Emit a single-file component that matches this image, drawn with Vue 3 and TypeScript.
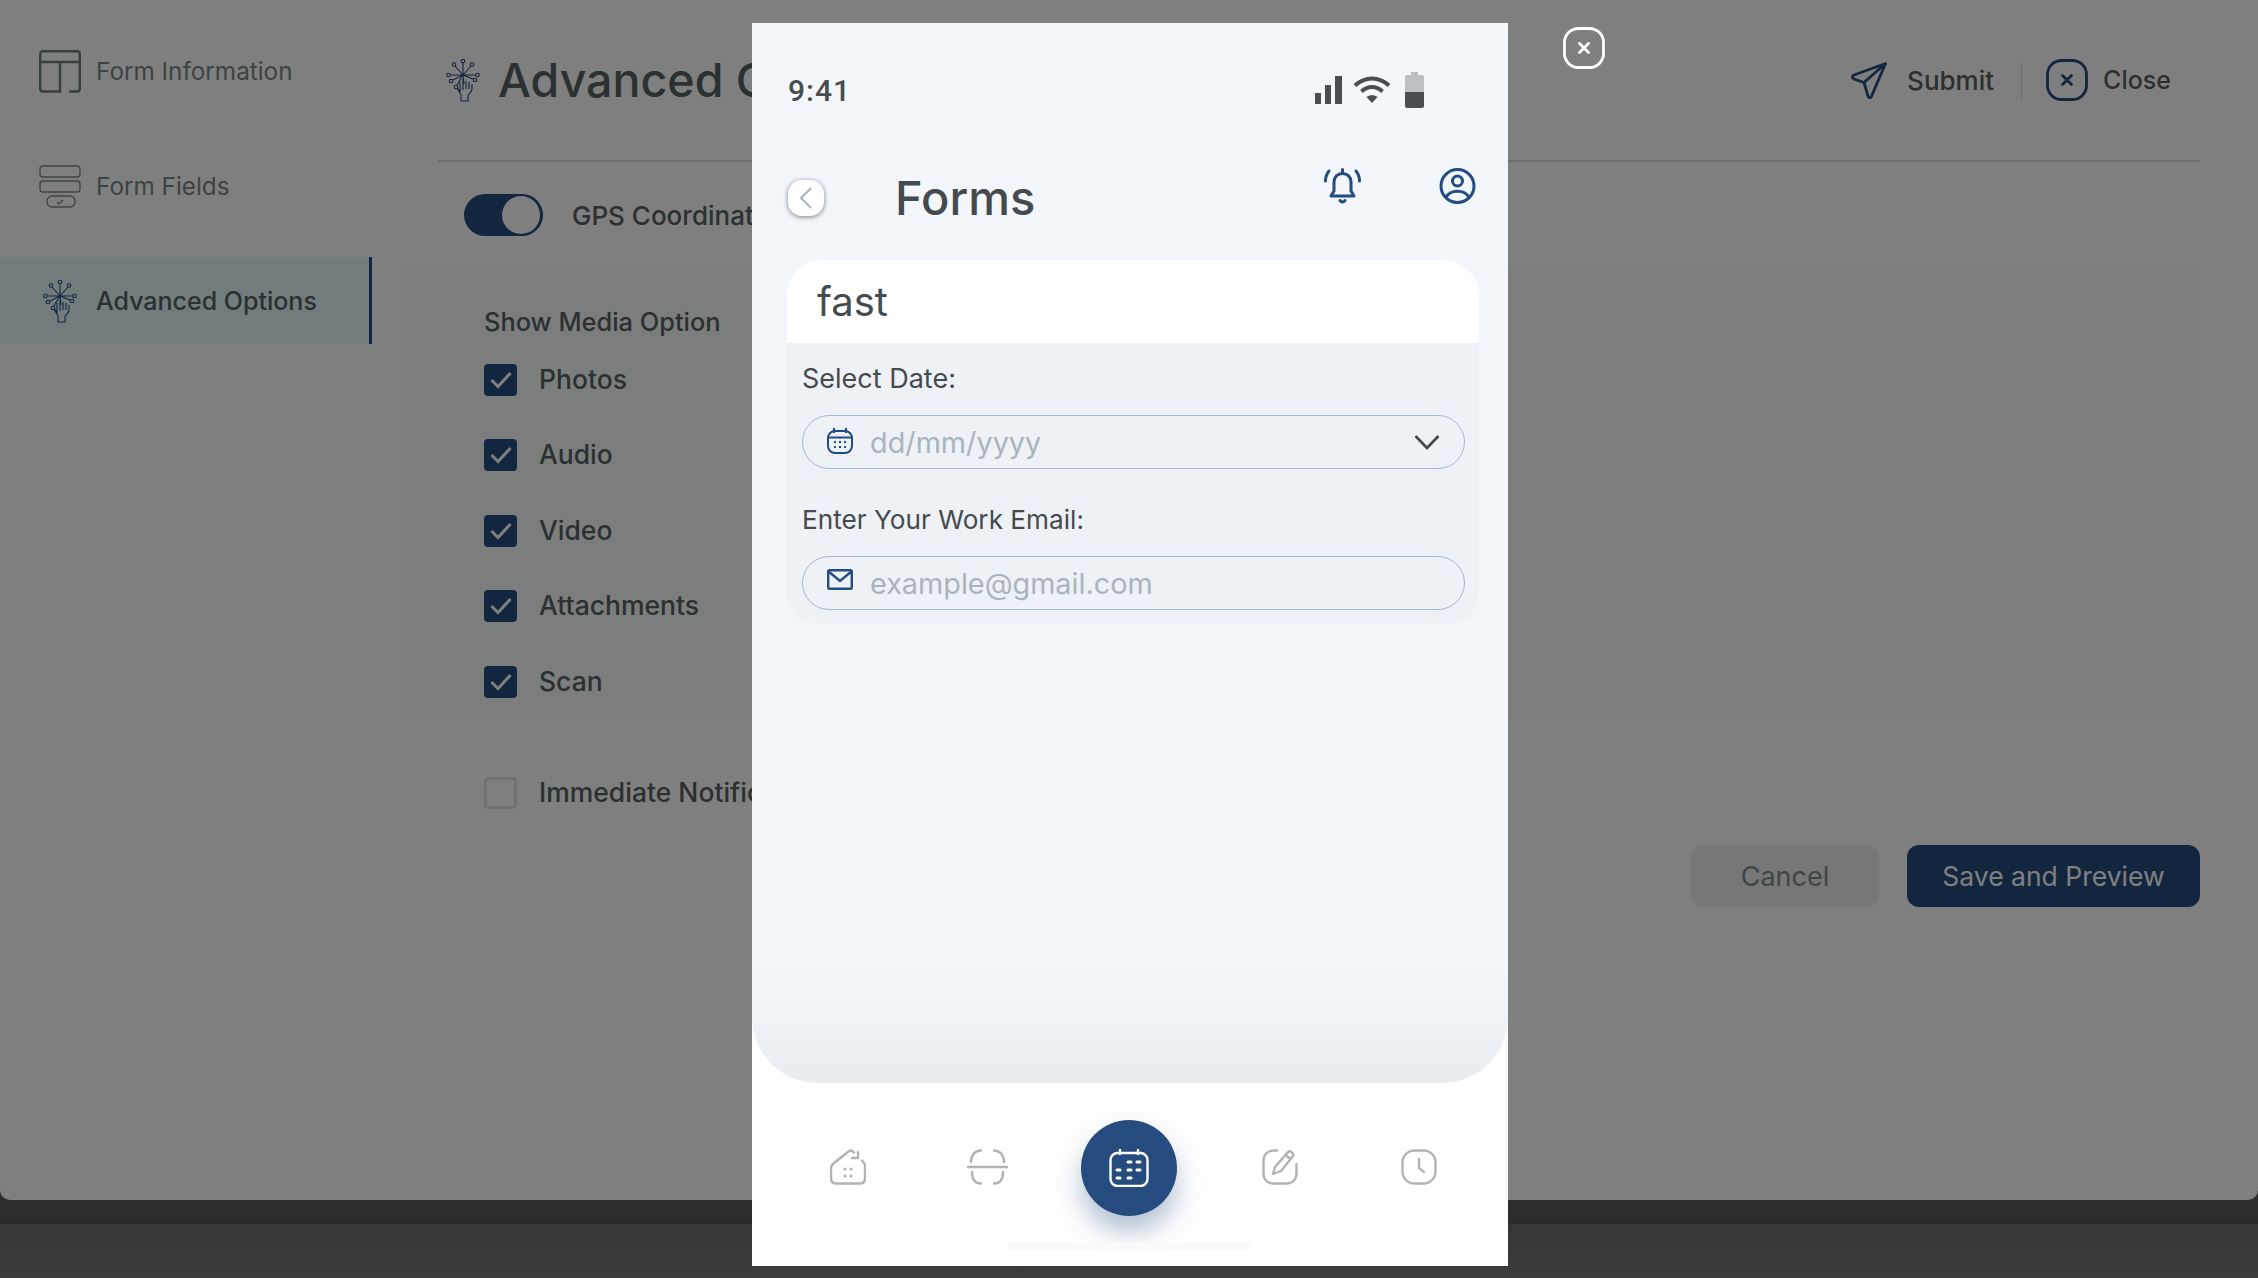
<template>
  <div class="page">
    <svg class="defs" width="0" height="0">
      <symbol id="burst" viewBox="0 0 34 44">
        <g fill="none" stroke="currentColor" stroke-width="1.1">
          <path d="M17 17V5M17 17l-8-9M17 17l8-9M17 17H4M17 17h13M17 17l-10 5M17 17l10 4M17 17l-6 10M17 17l1 9" />
          <circle cx="17" cy="3" r="1.8" />
          <circle cx="8" cy="6.5" r="1.8" />
          <circle cx="26" cy="6.5" r="1.8" />
          <circle cx="2.5" cy="17" r="1.8" />
          <circle cx="31.5" cy="17" r="1.8" />
          <circle cx="5" cy="23" r="1.8" />
          <circle cx="29" cy="22" r="1.8" />
          <circle cx="10" cy="29" r="1.8" />
          <path d="M17 21v11M20 23v8M23 24v7M26 26v5M14 24v9l-3-3M26 31c0 3-3 5-4 6v6H15v-6l-4-7" />
        </g>
      </symbol>
    </svg>

    <div class="shell">
      <aside class="sidebar">
        <div v-for="item in menu" :key="item.label" class="side-item" :class="{ active: item.active }">
          <span class="side-icon">
            <svg v-if="item.icon === 'layout'" width="42" height="43" viewBox="0 0 42 43" fill="none" stroke="#6d7f81" stroke-width="2.4">
              <path d="M30 41.5h8a2.8 2.8 0 0 0 2.8-2.8V4A2.8 2.8 0 0 0 38 1.2H4A2.8 2.8 0 0 0 1.2 4v34.7A2.8 2.8 0 0 0 4 41.5h17V12M1.2 12h39.6" />
            </svg>
            <svg v-else-if="item.icon === 'fields'" width="42" height="43" viewBox="0 0 42 43" fill="none" stroke="#7e8d8f" stroke-width="1.4">
              <rect x="1" y="1" width="40" height="11" rx="3" />
              <rect x="1" y="16" width="40" height="11" rx="3" />
              <rect x="8" y="31" width="28" height="11" rx="5" />
              <path d="M18 37l2 2 4-4" />
            </svg>
            <svg v-else width="34" height="44" class="burst"><use href="#burst" /></svg>
          </span>
          <span>{{ item.label }}</span>
        </div>
      </aside>

      <main class="main">
        <header class="main-head">
          <svg width="34" height="44" class="burst head-burst"><use href="#burst" /></svg>
          <h1 class="main-title">Advanced Options</h1>
          <div class="actions">
            <button class="action">
              <svg width="36" height="37" viewBox="0 0 36 37" fill="none" stroke="#244c7e" stroke-width="2.8" stroke-linejoin="round">
                <path d="M34.5 1.5 3 13c-2.200 1-2 3.200 0 4l10 3.500 4 13.500c.7 2.200 3 2 3.600 0L34.500 1.500ZM13 20.500 34.500 1.500" />
              </svg>
              Submit
            </button>
            <span class="action-sep"></span>
            <button class="action close-action">
              <svg width="42" height="42" viewBox="0 0 42 42" fill="none" stroke="#244c7e" stroke-width="2.800" stroke-linecap="round">
                <rect x="1.500" y="1.500" width="39" height="39" rx="14" />
                <path d="M16.500 16.500l9 9M25.500 16.500l-9 9" />
              </svg>
              Close
            </button>
          </div>
        </header>

        <div class="gps-row">
          <span class="toggle"><span class="toggle-knob"></span></span>
          <span class="gps-label">GPS Coordinates</span>
        </div>

        <section class="media-panel">
          <div class="media-title">Show Media Option</div>
          <div class="media-list">
            <label v-for="opt in mediaOptions" :key="opt" class="check-row">
              <span class="check on">
                <svg width="24" height="20" viewBox="0 0 24 20" fill="none" stroke="#fff" stroke-width="3">
                  <path d="M2.500 10l6.500 6.500L21.500 3" />
                </svg>
              </span>
              <span class="check-text">{{ opt }}</span>
            </label>
          </div>
        </section>

        <label class="check-row notify-row">
          <span class="check"></span>
          <span class="check-text">Immediate Notification</span>
        </label>

        <div class="form-buttons">
          <button class="btn-cancel">Cancel</button>
          <button class="btn-save">Save and Preview</button>
        </div>
      </main>
    </div>

    <div class="base-footer"></div>
    <div class="base-bottom"></div>

    <!-- preview overlay -->
    <div class="backdrop"></div>

    <div class="phone">
      <div class="phone-screen">
        <div class="status-bar">
          <span class="time">9:41</span>
          <span class="status-icons">
            <svg width="28" height="28" viewBox="0 0 28 28" fill="#4a4e52">
              <rect x="0" y="17" width="6" height="11" />
              <rect x="10" y="9" width="6" height="19" />
              <rect x="20" y="0" width="7" height="28" />
            </svg>
            <svg width="38" height="28" viewBox="0 0 38 28" fill="none" stroke="#4a4e52" stroke-width="4">
              <path d="M2 9.500c10-9.500 24-9.500 34 0M8.500 15.500c6.500-6 14.500-6 21 0" />
              <path d="M19 27l-5.500-6c3-2.500 8-2.500 11 0L19 27Z" fill="#4a4e52" stroke="none" />
            </svg>
            <svg class="battery" width="19" height="36" viewBox="0 0 19 36">
              <path d="M6 0h7v3h4a2 2 0 0 1 2 2v15H0V5a2 2 0 0 1 2-2h4Z" fill="#bcc0c4" />
              <path d="M0 20h19v14a2 2 0 0 1-2 2H2a2 2 0 0 1-2-2Z" fill="#4a4e52" />
            </svg>
          </span>
        </div>

        <div class="phone-head">
          <button class="back">
            <svg width="14" height="24" viewBox="0 0 14 24" fill="none" stroke="#a9b5be" stroke-width="2">
              <path d="M12 2 2 12l10 10" />
            </svg>
          </button>
          <h2 class="phone-title">Forms</h2>
          <svg class="bell" width="37" height="36" viewBox="0 0 37 36" fill="none" stroke="#234c80" stroke-width="3" stroke-linecap="round">
            <path d="M7 28h23l-3-5V14c0-5-3.500-8.500-8.500-8.500S10 9 10 14v9l-3 5Z" stroke-linejoin="round" />
            <path d="M18.500 1.500v3M16 32.500c1.500 2 3.500 2 5 0M5 3C2.500 6 1.500 9.500 1.500 13M32 3c2.500 3 3.500 6.500 3.500 10" />
          </svg>
          <svg width="37" height="36" viewBox="0 0 37 36" fill="none" stroke="#234c80" stroke-width="3">
            <circle cx="18.500" cy="18" r="16.500" />
            <circle cx="18.500" cy="13" r="5" />
            <path d="M7 30c3-9 20-9 23 0" />
          </svg>
        </div>

        <div class="form-card">
          <div class="form-name">fast</div>
          <div class="form-body">
            <div class="field-label">Select Date:</div>
            <div class="field">
              <svg class="field-icon" width="26" height="27" viewBox="0 0 26 27" fill="none" stroke="#234c80" stroke-width="2">
                <rect x="1" y="4" width="24" height="22" rx="7" />
                <path d="M7 1v5M19 1v5M1 10.500h24" />
                <path d="M7 15h2M12 15h2M17 15h2M7 20h2M12 20h2M17 20h2" stroke-width="1.800" />
              </svg>
              <span class="placeholder">dd/mm/yyyy</span>
              <svg class="chevron" width="26" height="16" viewBox="0 0 26 16" fill="none" stroke="#454a4f" stroke-width="2.600">
                <path d="M1.500 2 13 14 24.500 2" />
              </svg>
            </div>
            <div class="field-label second">Enter Your Work Email:</div>
            <div class="field">
              <svg class="field-icon mail" width="26" height="21" viewBox="0 0 26 21" fill="none" stroke="#234c80" stroke-width="2.400">
                <rect x="1.200" y="1.200" width="23.600" height="18.600" rx="1.500" />
                <path d="M1.500 2.500 13 12 24.500 2.500" />
              </svg>
              <span class="placeholder">example@gmail.com</span>
            </div>
          </div>
        </div>
      </div>

      <nav class="tabbar">
        <svg class="tab tab-home" width="36" height="36" viewBox="0 0 36 36" fill="none" stroke="#b3b3b3" stroke-width="2.400" stroke-linecap="round">
          <path d="M24 3.500c-2-2.500-4-2.500-6-.5L4 14c-2 1.500-3 3-3 5v10c0 3.500 2 5.500 5 5.500h24c3 0 5-2 5-5.500V17c0-2.500-1.500-4-3-5.500M28 3v6h-6" />
          <path d="M15 20h.1M21 20h.1M15 27h.1M21 27h.1" stroke-width="3" />
        </svg>
        <svg class="tab tab-scan" width="41" height="36" viewBox="0 0 41 36" fill="none" stroke="#b3b3b3" stroke-width="2.400" stroke-linecap="round">
          <path d="M1 18h39" />
          <path d="M4 13C4 6 8 1.500 14 1.500M37 13c0-7-4-11.500-10-11.500M5 23c0 7 3 11.500 9 11.500M36 23c0 7-3 11.500-9 11.500" />
        </svg>
        <button class="tab-main">
          <svg width="40" height="38" viewBox="0 0 40 38" fill="none" stroke="#fff" stroke-width="2.400" stroke-linecap="round">
            <rect x="1.500" y="4" width="37" height="33" rx="7" />
            <path d="M11 1v4M29 1v4" />
            <path d="M19 13h3M28 13h3M8 21h3M19 21h3M28 21h3M8 29h3M19 29h3" stroke-width="3" />
          </svg>
        </button>
        <svg class="tab tab-edit" width="36" height="36" viewBox="0 0 36 36" fill="none" stroke="#b3b3b3" stroke-width="2.400" stroke-linecap="round" stroke-linejoin="round">
          <path d="M15 1.500H12C5 1.500 1.500 6 1.500 12v12C1.500 31 6 34.500 12 34.500h12c7 0 10.500-4.500 10.500-10.500v-9" />
          <path d="M11 25l2-7L26 3c2-2 6 1 5 4L19 22l-8 3ZM23.500 6l5 4" />
        </svg>
        <svg class="tab tab-clock" width="36" height="36" viewBox="0 0 36 36" fill="none" stroke="#b3b3b3" stroke-width="2.400" stroke-linecap="round">
          <rect x="1.500" y="1.500" width="33" height="33" rx="12" />
          <path d="M18 10v9l5 4" />
        </svg>
        <span class="home-bar"></span>
      </nav>
    </div>

    <button class="preview-close">
      <svg width="42" height="42" viewBox="0 0 42 42" fill="none" stroke="#fff" stroke-width="2.800" stroke-linecap="round">
        <rect x="1.500" y="1.500" width="39" height="39" rx="14" />
        <path d="M16.500 16.500l9 9M25.500 16.500l-9 9" />
      </svg>
    </button>
  </div>
</template>

<script setup lang="ts">
interface MenuItem {
  label: string;
  icon: string;
  active?: boolean;
}

const menu: MenuItem[] = [
  { label: "Form Information", icon: "layout" },
  { label: "Form Fields", icon: "fields" },
  { label: "Advanced Options", icon: "burst", active: true },
];

const mediaOptions = ["Photos", "Audio", "Video", "Attachments", "Scan"];
</script>

<style>
html,
body {
  margin: 0;
  background: #6c6c6c;
}
</style>

<style scoped>
.page {
  position: relative;
  width: 2258px;
  height: 1278px;
  overflow: hidden;
  font-family: Inter, "Noto Sans", sans-serif;
  color: #566060;
  background: #5a5a5a;
}

.defs {
  position: absolute;
}

button {
  font-family: inherit;
  border: none;
  background: none;
  padding: 0;
}

.shell {
  display: flex;
  height: 1200px;
  background: #fff;
  border-radius: 0 0 10px 10px;
}

.sidebar {
  width: 372px;
  flex-shrink: 0;
  padding-top: 28px;
  display: flex;
  flex-direction: column;
  gap: 29px;
  box-sizing: border-box;
}

.side-item {
  height: 86px;
  display: flex;
  align-items: center;
  padding-left: 39px;
  gap: 15px;
  font-size: 24.3px;
  color: #7a8688;
}

.side-item.active {
  height: 87px;
  margin-top: -1px;
  background: #e4f8f8;
  border-right: 3px solid #244c7e;
  color: #566060;
  font-size: 25px;
  font-weight: 500;
}

.side-icon {
  width: 42px;
  display: flex;
  justify-content: center;
}

.burst {
  color: #244c7e;
}

.main {
  flex: 1;
  padding: 0 58px 0 66px;
  min-width: 0;
}

.main-head {
  height: 162px;
  display: flex;
  align-items: center;
  border-bottom: 2px solid #dadada;
  box-sizing: border-box;
}

.head-burst {
  margin: 0 18px 0 8px;
}

.main-title {
  margin: 0;
  font-size: 46.5px;
  font-weight: 500;
  color: #566060;
}

.actions {
  margin-left: auto;
  margin-right: 29px;
  display: flex;
  align-items: center;
}

.action {
  display: flex;
  align-items: center;
  gap: 20px;
  font-size: 26px;
  font-weight: 500;
  color: #5c5c5c;
}

.close-action {
  gap: 15px;
  font-size: 25px;
}

.action-sep {
  width: 1px;
  height: 39px;
  background: #dcdcdc;
  margin: 0 24px 0 27px;
}

.gps-row {
  display: flex;
  align-items: center;
  gap: 29px;
  margin: 32px 0 30px 26px;
  height: 42px;
  font-size: 26px;
  font-weight: 500;
}

.toggle {
  width: 79px;
  height: 42px;
  border-radius: 21px;
  background: #244c7e;
  display: flex;
  justify-content: flex-end;
  padding: 2px 3px;
  box-sizing: border-box;
}

.toggle-knob {
  width: 38px;
  height: 38px;
  border-radius: 50%;
  background: #fff;
}

.media-panel {
  margin-left: -33px;
  height: 454px;
  padding: 39px 0 0 79px;
  box-sizing: border-box;
  background: #f8fcfc;
}

.media-title {
  height: 34px;
  line-height: 34px;
  font-size: 25.4px;
  font-weight: 500;
  margin-bottom: 25px;
}

.media-list {
  display: flex;
  flex-direction: column;
  gap: 43.4px;
}

.check-row {
  display: flex;
  align-items: center;
  gap: 22px;
  height: 32px;
  font-size: 26.5px;
  font-weight: 500;
}

.check-text {
  margin-top: -2px;
}

.notify-row {
  margin: 57px 0 0 46px;
}

.check {
  width: 33px;
  height: 32px;
  border-radius: 4px;
  box-sizing: border-box;
  border: 3px solid #dfe6ea;
  display: flex;
  align-items: center;
  justify-content: center;
}

.check.on {
  background: #244c7e;
  border: none;
}

.form-buttons {
  display: flex;
  justify-content: flex-end;
  gap: 28px;
  margin-top: 36px;
}

.btn-cancel,
.btn-save {
  height: 62px;
  border-radius: 12px;
}

.btn-cancel {
  width: 188px;
  background: #efefef;
  color: #808a8a;
  font-size: 27px;
}

.btn-save {
  width: 293px;
  background: #244c7e;
  color: #fff;
  font-size: 26.5px;
}

.base-footer {
  height: 22px;
  background: #5a5a5a;
  border-bottom: 2px solid #545454;
}

.base-bottom {
  height: 54px;
  background: linear-gradient(#6c6c6c, #787878);
}

.backdrop {
  position: absolute;
  inset: 0;
  background: rgba(0, 0, 0, 0.5);
}

.phone {
  position: absolute;
  left: 752px;
  top: 23px;
  width: 756px;
  height: 1243px;
  background: #fff;
  display: flex;
  flex-direction: column;
}

.phone-screen {
  height: 1060px;
  flex-shrink: 0;
  background: linear-gradient(#f3f6fb 89%, #e9edf2);
  border-radius: 0 0 66px 66px;
  padding-top: 47px;
  box-sizing: border-box;
}

.status-bar {
  height: 40px;
  display: flex;
  align-items: center;
  justify-content: space-between;
  padding: 0 84px 0 36px;
}

.time {
  font-family: Roboto, sans-serif;
  font-size: 30px;
  font-weight: 500;
  letter-spacing: 1px;
  color: #484d50;
}

.status-icons {
  display: flex;
  align-items: center;
  gap: 10px;
}

.battery {
  margin-left: 4px;
}

.phone-head {
  display: flex;
  align-items: flex-start;
  height: 64px;
  margin: 58px 32px 28px 36px;
}

.back {
  width: 36px;
  height: 36px;
  margin-top: 12px;
  border-radius: 14px;
  background: #fff;
  box-shadow: 0 1px 5px rgba(0, 0, 0, 0.5);
  display: flex;
  align-items: center;
  justify-content: center;
}

.phone-title {
  margin: -1px 0 0 71px;
  font-size: 47px;
  line-height: 62px;
  font-weight: 500;
  color: #454a4f;
}

.bell {
  margin-left: auto;
  margin-right: 78px;
}

.form-card {
  margin: 0 29px 0 35px;
}

.form-name {
  height: 83px;
  line-height: 83px;
  padding-left: 30px;
  background: #fff;
  border-radius: 36px 36px 0 0;
  font-size: 40px;
  color: #454a4f;
}

.form-body {
  background: #eef1f5;
  border-radius: 0 0 30px 30px;
  padding: 21px 14px 14px 15px;
  color: #454a4f;
}

.field-label {
  height: 30px;
  line-height: 30px;
  font-size: 27px;
  margin-bottom: 21px;
}

.field-label.second {
  margin-top: 36px;
  font-size: 26.2px;
}

.field {
  height: 54px;
  border: 1px solid #a3b8d4;
  border-radius: 27px;
  box-sizing: border-box;
  display: flex;
  align-items: center;
  padding: 0 24px;
}

.field-icon {
  margin-top: -4px;
  flex-shrink: 0;
}

.field-icon.mail {
  margin-top: -7px;
}

.placeholder {
  margin-left: 17px;
  font-size: 28.8px;
  color: #a9b5be;
}

.chevron {
  margin-left: auto;
}

.tabbar {
  position: relative;
  flex: 1;
  display: flex;
  align-items: center;
  padding: 36px 0 50px 78px;
  box-sizing: border-box;
}

.tab {
  margin-top: -2px;
}

.tab-home {
  margin-right: 101px;
}

.tab-scan {
  margin-right: 73px;
}

.tab-edit {
  margin: -2px 103px 0 85px;
}

.tab-main {
  width: 96px;
  height: 96px;
  flex-shrink: 0;
  border-radius: 50%;
  background: #264c7f;
  box-shadow: 0 16px 26px rgba(38, 76, 127, 0.35);
  display: flex;
  align-items: center;
  justify-content: center;
}

.home-bar {
  position: absolute;
  left: 256px;
  bottom: 16px;
  width: 243px;
  height: 8px;
  background: #f8fafc;
}

.preview-close {
  position: absolute;
  left: 1563px;
  top: 27px;
  width: 42px;
  height: 42px;
}
</style>
